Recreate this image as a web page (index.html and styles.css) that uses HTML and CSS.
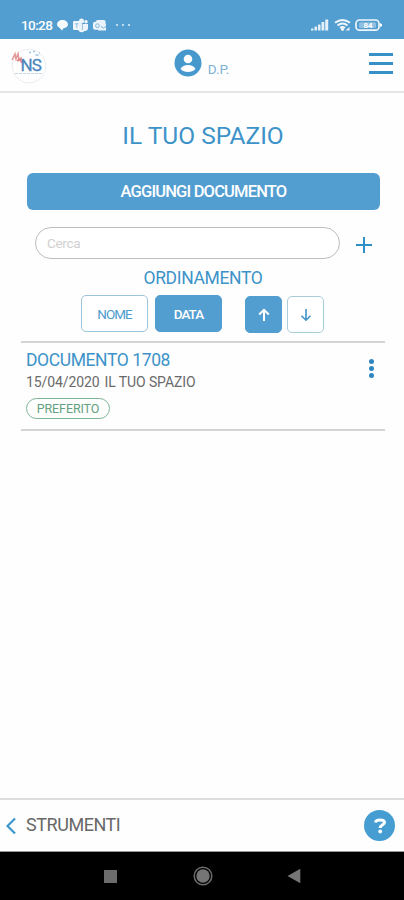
FILE: index.html
```html
<!DOCTYPE html>
<html lang="it">
<head>
    <meta charset="UTF-8">
    <meta name="viewport" content="width=device-width, initial-scale=1.0">
    <title>Il tuo spazio</title>
    <link rel="stylesheet" href="styles.css">
</head>
<body>
    <div class="status-bar">
        <span class="time">10:28</span>
        <svg class="status-left" width="80" height="16" viewBox="0 0 80 16" fill="#fff">
            <path d="M5.5 3C2.400 3 0 5 0 7.300c0 1.500 1 2.700 2.500 3.400L5 13.500l1.500-2.200c2.600-.3 4.500-2 4.500-4C11 5 8.600 3 5.500 3z" opacity=".95"/>
            <g opacity=".9">
                <circle cx="24.500" cy="4" r="2.500"/>
                <circle cx="29" cy="4.700" r="1.800"/>
                <rect x="16" y="4" width="8.500" height="9" rx="1"/>
                <path d="M21 7h10v4c0 2-1.300 3-3 3h-.6c-.8 1-1.600 1.300-2.600 1.300-2 0-3.800-1.300-3.800-3.500z"/>
            </g>
            <path d="M18 6.800h3.600M19.800 6.800v4M25.400 7v6" stroke="#8fc0e1" stroke-width="1" fill="none"/>
            <g opacity=".88">
                <rect x="39" y="3" width="9.500" height="9" rx="1.500"/>
                <rect x="36" y="4.800" width="8.500" height="8" rx="2"/>
                <path d="M42 9.500l7-3v7h-8z"/>
            </g>
            <circle cx="40.500" cy="8.700" r="1.900" fill="none" stroke="#71afd9" stroke-width=".9"/>
            <path d="M44 9.500l2.500 1.500 2.500-1.600" stroke="#71afd9" stroke-width=".9" fill="none"/>
        </svg>
        <span class="more-dots"><i></i><i></i><i></i></span>
        <svg class="status-right" width="74" height="16" viewBox="0 0 74 16" fill="#fff">
            <g opacity=".85">
                <rect x="1" y="11.500" width="2.500" height="2" rx=".5"/>
                <rect x="4.500" y="9.500" width="2.500" height="4" rx=".5"/>
                <rect x="8" y="7.500" width="2.500" height="6" rx=".5"/>
                <rect x="11.500" y="5" width="2.800" height="8.500" rx=".5"/>
                <rect x="15.200" y="2.500" width="3" height="11" rx=".5"/>
            </g>
            <g fill="none" stroke="#fff" stroke-width="1.900" opacity=".9">
                <path d="M25 5.800q7.500-5.500 15 0M27.500 8.500q5-4 10 0M30 11q2.500-2 5 0"/>
            </g>
            <circle cx="32.500" cy="12.300" r="1.500"/>
            <path d="M35.500 13.500h4V10z" opacity=".85"/>
            <rect x="46" y="3" width="23" height="10.200" rx="3.500" fill="none" stroke="#fff" stroke-width="1.700" opacity=".9"/>
            <rect x="49" y="5.200" width="17" height="5.800" rx="1.500" opacity=".35"/>
            <path d="M70 6l2 1.200v1.800L70 10.200z"/>
            <text x="53.500" y="11" class="battery-text">84</text>
        </svg>
    </div>

    <header class="header">
        <svg class="logo" width="36" height="36" viewBox="0 0 36 36">
            <circle cx="18" cy="18" r="16.800" fill="#fff" stroke="#e9edf0"/>
            <path d="M1 12l3-6 1 5 2-5 1 6 2-2 1 4" fill="none" stroke="#e59a9a" stroke-width="1.600"/>
            <path d="M6 13l3-2 2 4" fill="none" stroke="#dc8585" stroke-width="1.800"/>
            <path d="M18 4.500h2M22 3.500h2M24.500 7h3M28 5h1" stroke="#9fc3e2" stroke-width="1.300"/>
            <path d="M4 25.500h27" stroke="#c5d3df" stroke-width="1" stroke-dasharray="3 1"/>
            <text x="9.500" y="23.300" class="logo-text">NS</text>
        </svg>
        <div class="user">
            <svg width="28" height="28" viewBox="0 0 28 28">
                <circle cx="14" cy="14" r="13.500" fill="#4698cd"/>
                <circle cx="14" cy="10" r="4.300" fill="#fff"/>
                <path d="M6.500 20c1.200-2.700 4.200-4 7.500-4s6.300 1.300 7.500 4c-1.700 1.900-4.500 3-7.500 3s-5.800-1.100-7.500-3z" fill="#fff"/>
            </svg>
            <span>D.P.</span>
        </div>
        <div class="menu"><i></i><i></i><i></i></div>
    </header>

    <main class="content">
        <h1>IL TUO SPAZIO</h1>
        <button class="add-button">AGGIUNGI DOCUMENTO</button>
        <div class="search">
            <input type="text" placeholder="Cerca" aria-label="Cerca">
            <svg width="18" height="18" viewBox="0 0 18 18">
                <path d="M9 1v16M1 9h16" stroke="#2e8fc7" stroke-width="2"/>
            </svg>
        </div>
        <h2>ORDINAMENTO</h2>
        <div class="sort">
            <button class="sort-button">NOME</button>
            <button class="sort-button active data">DATA</button>
            <button class="arrow-button active">
                <svg width="14" height="14" viewBox="0 0 14 14"><path d="M7 13V2M2.200 6.500L7 1.800l4.800 4.700" fill="none" stroke="#fff" stroke-width="2"/></svg>
            </button>
            <button class="arrow-button">
                <svg width="14" height="14" viewBox="0 0 14 14"><path d="M7 1v11M2.500 7.800L7 12.200l4.500-4.400" fill="none" stroke="#4095ca" stroke-width="1.600"/></svg>
            </button>
        </div>
        <div class="document">
            <div class="document-info">
                <div class="document-title">DOCUMENTO 1708</div>
                <div class="document-meta"><span>15/04/2020</span><span>IL TUO SPAZIO</span></div>
                <div class="tag">PREFERITO</div>
            </div>
            <div class="document-menu"><i></i><i></i><i></i></div>
        </div>
    </main>

    <footer class="footer">
        <svg width="10" height="18" viewBox="0 0 10 18"><path d="M9 1.500L1.500 9 9 16.500" fill="none" stroke="#3b96cc" stroke-width="2.200"/></svg>
        <span class="back">STRUMENTI</span>
        <div class="help">
            <svg width="14" height="18" viewBox="0 0 14 18">
                <path d="M2.500 5.500C2.700 3.600 4.400 2.900 7 2.900c3 0 4.500.8 4.500 2.600 0 2.400-4.300 2.200-4.300 5.500" fill="none" stroke="#fff" stroke-width="3"/>
                <circle cx="7.200" cy="14.500" r="1.900" fill="#fff"/>
            </svg>
        </div>
    </footer>

    <nav class="nav-bar">
        <svg width="13" height="13"><rect width="13" height="13" fill="#6c6c6c"/></svg>
        <svg width="20" height="20" viewBox="0 0 20 20"><circle cx="10" cy="10" r="8.800" fill="none" stroke="#6c6c6c" stroke-width="1.500"/><circle cx="10" cy="10" r="6.700" fill="#757575"/></svg>
        <svg width="14" height="16" viewBox="0 0 14 16"><path d="M13.300.8v14.400L.5 8z" fill="#757575"/></svg>
    </nav>
</body>
</html>
```
FILE: styles.css
```css
* {
    box-sizing: border-box;
}

body {
    font-family: Roboto, Arial, sans-serif;
    margin: 0;
    height: 900px;
    display: flex;
    flex-direction: column;
    background-color: #fefefe;
    color: #3d93c9;
    overflow: hidden;
}

svg {
    display: block;
    flex-shrink: 0;
}

button {
    font-family: inherit;
    padding: 0;
    cursor: pointer;
}

.status-bar {
    height: 39px;
    padding: 11px 20px 0 21px;
    display: flex;
    align-items: center;
    background-color: #539ed1;
    color: white;
}

.time {
    width: 36px;
    font-size: 13.5px;
    font-weight: 500;
    line-height: 16px;
    letter-spacing: -0.6px;
    white-space: nowrap;
}

.status-left {
    margin-top: -1px;
}

.more-dots {
    display: flex;
    gap: 4px;
    margin-left: -21px;
}

.more-dots i {
    width: 2px;
    height: 2px;
    border-radius: 50%;
    background-color: #e3f0f8;
}

.status-right {
    margin-left: auto;
}

.battery-text {
    font-size: 8px;
    font-weight: bold;
}

.header {
    height: 54px;
    padding: 0 11px;
    display: flex;
    justify-content: space-between;
    border-bottom: 2px solid #e5e5e5;
}

.logo {
    margin-top: 9px;
}

.logo-text {
    font-size: 17px;
    letter-spacing: -0.8px;
    fill: #4a86bd;
    stroke: #4a86bd;
    stroke-width: 0.3px;
}

.user {
    display: flex;
    gap: 6px;
    margin: 10px 0 0 -13px;
    font-size: 13.5px;
    letter-spacing: -0.1px;
    color: #7cb1d5;
}

.user span {
    line-height: 16px;
    margin-top: 12px;
}

.menu {
    display: flex;
    flex-direction: column;
    gap: 6px;
    margin-top: 14px;
}

.menu i {
    width: 24px;
    height: 3px;
    background-color: #3790c6;
}

.content {
    flex: 1;
    padding: 0 19px 0 21px;
}

h1 {
    margin: 29px 0 0;
    font-size: 24.5px;
    line-height: 28px;
    font-weight: normal;
    text-align: center;
}

.add-button {
    display: block;
    width: 353px;
    height: 37px;
    margin: 23px 0 0 6px;
    border: none;
    border-radius: 6px;
    background-color: #539ed1;
    color: white;
    font-size: 16.5px;
    font-weight: 500;
    letter-spacing: -0.82px;
}

.search {
    display: flex;
    align-items: center;
    gap: 15px;
    margin: 17px 0 0 14px;
}

.search input {
    width: 305px;
    height: 32px;
    padding: 0 11px;
    border: 1px solid #bdbdbd;
    border-radius: 16px;
    background-color: white;
    font-family: inherit;
    font-size: 13.5px;
    letter-spacing: -0.3px;
}

.search input::placeholder {
    color: #d0d0d0;
}

.search svg {
    margin-top: 4px;
}

h2 {
    margin: 8px 0 0;
    font-size: 17.5px;
    line-height: 22px;
    font-weight: normal;
    letter-spacing: -0.35px;
    text-align: center;
}

.sort {
    display: flex;
    margin: 6px 0 0 60px;
    height: 46px;
}

.sort-button {
    width: 67px;
    height: 37px;
    margin-right: 7px;
    border: 1px solid #9cc4de;
    border-radius: 5px;
    background-color: white;
    color: #4f9ccd;
    font-size: 13.5px;
    letter-spacing: -1px;
}

.arrow-button {
    width: 37px;
    height: 37px;
    margin: 1px 0 0 16px;
    display: flex;
    align-items: center;
    justify-content: center;
    border: 1px solid #a9ccd9;
    border-radius: 5px;
    background-color: white;
}

.arrow-button + .arrow-button {
    margin-left: 5px;
}

.sort .active {
    border-color: #539ed1;
    background-color: #539ed1;
    color: white;
}

.sort .data {
    font-weight: 500;
}

.document {
    display: flex;
    justify-content: space-between;
    height: 90px;
    padding: 7px 11px 0 5px;
    border-top: 2px solid #d4d4d4;
    border-bottom: 2px solid #d4d4d4;
}

.document-title {
    font-size: 17.5px;
    line-height: 20px;
    letter-spacing: -0.4px;
}

.document-meta {
    display: flex;
    gap: 5px;
    margin-top: 4px;
    font-size: 14px;
    line-height: 17px;
    letter-spacing: -0.1px;
    color: #6a6a6a;
}

.tag {
    width: 84px;
    height: 21px;
    margin-top: 7px;
    border: 1px solid #7fb597;
    border-radius: 11px;
    color: #63a181;
    font-size: 12.5px;
    line-height: 20px;
    letter-spacing: -0.1px;
    text-align: center;
}

.document-menu {
    display: flex;
    flex-direction: column;
    gap: 2px;
    margin-top: 9px;
}

.document-menu i {
    width: 5px;
    height: 5px;
    border-radius: 50%;
    background-color: #2e86c1;
}

.footer {
    height: 54px;
    padding: 0 9px 0 6px;
    display: flex;
    align-items: center;
    border-top: 2px solid #dddddd;
    border-bottom: 1px solid #999999;
}

.back {
    margin: -2px 0 0 10px;
    font-size: 18px;
    letter-spacing: -0.45px;
    color: #686868;
}

.help {
    width: 31px;
    height: 31px;
    margin-left: auto;
    display: flex;
    align-items: center;
    justify-content: center;
    border-radius: 50%;
    background-color: #459dd2;
}

.nav-bar {
    height: 48px;
    padding-left: 104px;
    display: flex;
    align-items: center;
    gap: 76px;
    background-color: black;
}

.nav-bar svg + svg + svg {
    margin-left: -2px;
}
```
